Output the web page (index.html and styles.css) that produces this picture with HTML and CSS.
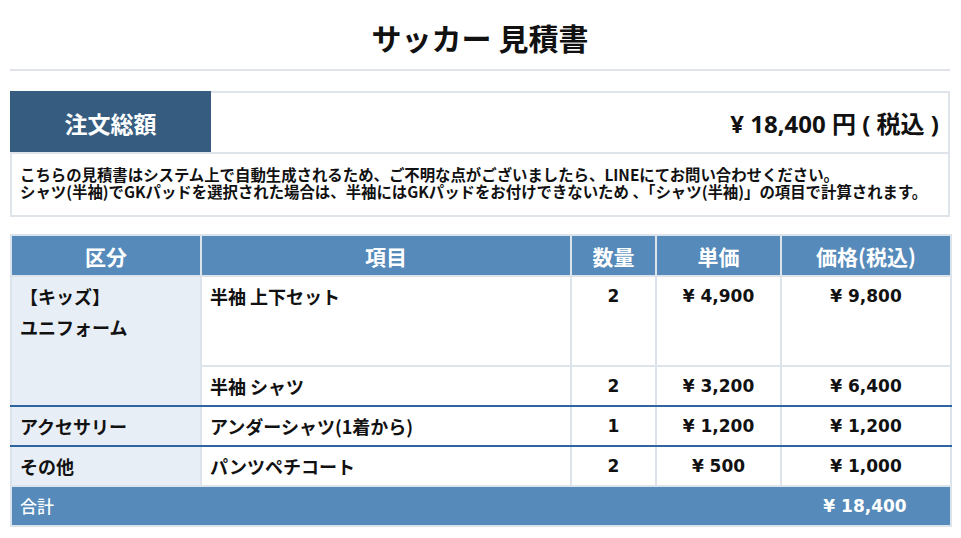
FILE: index.html
```html
<!DOCTYPE html>
<html lang="ja">
<head>
<meta charset="utf-8">
<title>サッカー 見積書</title>
<link rel="stylesheet" href="styles.css">
</head>
<body>
<div class="page">
  <h1 class="title">サッカー 見積書</h1>

  <div class="summary">
    <div class="summary-top">
      <div class="summary-label">注文総額</div>
      <div class="summary-value">¥ 18,400 円 ( 税込 )</div>
    </div>
    <div class="summary-note">
      <p>こちらの見積書はシステム上で自動生成されるため、ご不明な点がございましたら、LINEにてお問い合わせください。</p>
      <p>シャツ(半袖)でGKパッドを選択された場合は、半袖にはGKパッドをお付けできないため 、「シャツ(半袖)」の項目で計算されます。</p>
    </div>
  </div>

  <table class="quote">
    <colgroup>
      <col class="c1"><col class="c2"><col class="c3"><col class="c4"><col class="c5">
    </colgroup>
    <thead>
      <tr><th>区分</th><th>項目</th><th>数量</th><th>単価</th><th>価格(税込)</th></tr>
    </thead>
    <tbody>
      <tr class="tall">
        <td class="cat end" rowspan="2"><span class="line">【キッズ】</span><span class="line second">ユニフォーム</span></td>
        <td class="item">半袖 上下セット</td>
        <td class="num">2</td>
        <td class="num">¥ 4,900</td>
        <td class="num">¥ 9,800</td>
      </tr>
      <tr class="end">
        <td class="item">半袖 シャツ</td>
        <td class="num">2</td>
        <td class="num">¥ 3,200</td>
        <td class="num">¥ 6,400</td>
      </tr>
      <tr class="end">
        <td class="cat">アクセサリー</td>
        <td class="item">アンダーシャツ(1着から)</td>
        <td class="num">1</td>
        <td class="num">¥ 1,200</td>
        <td class="num">¥ 1,200</td>
      </tr>
      <tr>
        <td class="cat">その他</td>
        <td class="item">パンツペチコート</td>
        <td class="num">2</td>
        <td class="num">¥ 500</td>
        <td class="num">¥ 1,000</td>
      </tr>
    </tbody>
    <tfoot>
      <tr>
        <td class="total-label" colspan="4">合計</td>
        <td class="total-value">¥ 18,400</td>
      </tr>
    </tfoot>
  </table>
</div>
</body>
</html>
```

FILE: styles.css
```css
html, body {
  margin: 0;
  padding: 0;
  background: #ffffff;
}

body {
  font-family: "Noto Sans CJK JP", "Noto Sans", sans-serif;
  color: #111111;
}

.page {
  width: 940px;
  margin: 0 10px;
}

.title {
  margin: 0;
  padding: 17px 0 12px;
  font-size: 30px;
  line-height: 40px;
  font-weight: 700;
  text-align: center;
  color: #111111;
  border-bottom: 2px solid #e1e5ea;
}

.summary {
  margin-top: 20px;
  border: 2px solid #dfe4ea;
}

.summary-top {
  display: flex;
  height: 59px;
  border-bottom: 2px solid #dfe4ea;
}

.summary-label {
  width: 201px;
  margin: -2px 0 0 -2px;
  padding-top: 2px;
  background: #365c80;
  color: #ffffff;
  font-size: 23px;
  font-weight: 700;
  display: flex;
  align-items: center;
  justify-content: center;
}

.summary-value {
  flex: 1;
  display: flex;
  align-items: center;
  justify-content: flex-end;
  padding-right: 9px;
  font-family: "Noto Sans", "Noto Sans CJK JP", sans-serif;
  font-size: 24px;
  font-weight: 700;
}

.summary-note {
  padding: 12px 8px 15px 8px;
  font-size: 15.4px;
  line-height: 17px;
  font-weight: 700;
}

.summary-note p {
  margin: 0;
}

.quote {
  margin-top: 17px;
  width: 940px;
  table-layout: fixed;
  border-collapse: collapse;
  border: 2px solid #dde3ea;
}

.c1 { width: 190px; }
.c2 { width: 370px; }
.c3 { width: 85px; }
.c4 { width: 125px; }
.c5 { width: 170px; }

.quote th {
  height: 39px;
  padding: 0;
  background: #558aba;
  color: #ffffff;
  font-size: 21px;
  font-weight: 700;
  line-height: 24px;
  text-align: center;
  border: 2px solid #dde3ea;
}

.quote td {
  padding: 9px 10px 9px 8px;
  line-height: 20px;
  vertical-align: top;
  border: 2px solid #dde3ea;
  font-size: 18px;
  font-weight: 700;
  color: #111111;
}

.quote tr.tall td {
  height: 70px;
}

.quote tr.end td,
.quote td.end {
  border-bottom: 2px solid #2e64a0;
}

.quote td.cat {
  background: #e8eef5;
}

.quote td.cat .line {
  display: block;
}

.quote td.cat .second {
  margin-top: 11px;
}

.quote td.num {
  text-align: center;
  padding-left: 4px;
  padding-right: 4px;
  font-family: "DejaVu Sans", "Noto Sans CJK JP", sans-serif;
  font-size: 17px;
}

.quote tfoot td {
  background: #558aba;
  color: #ffffff;
  height: 20px;
}

.quote td.total-label {
  font-size: 17px;
  font-weight: 500;
  border-right-color: #558aba;
}

.quote td.total-value {
  text-align: center;
  font-family: "DejaVu Sans", "Noto Sans CJK JP", sans-serif;
  font-size: 17px;
  border-left-color: #558aba;
}
```
